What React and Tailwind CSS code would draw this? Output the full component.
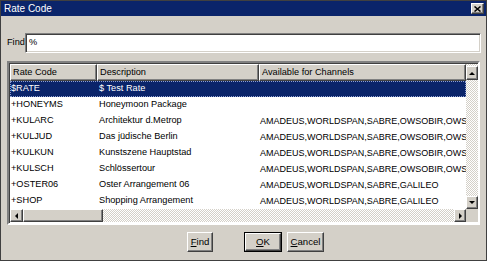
import React from 'react';

const rows = [
  { code: '$RATE', desc: '$ Test Rate', ch: '' },
  { code: '+HONEYMS', desc: 'Honeymoon Package', ch: '' },
  { code: '+KULARC', desc: 'Architektur d.Metrop', ch: 'AMADEUS,WORLDSPAN,SABRE,OWSOBIR,OWSUNI' },
  { code: '+KULJUD', desc: 'Das jüdische Berlin', ch: 'AMADEUS,WORLDSPAN,SABRE,OWSOBIR,OWSUNI' },
  { code: '+KULKUN', desc: 'Kunstszene Hauptstad', ch: 'AMADEUS,WORLDSPAN,SABRE,OWSOBIR,OWSUNI' },
  { code: '+KULSCH', desc: 'Schlössertour', ch: 'AMADEUS,WORLDSPAN,SABRE,OWSOBIR,OWSUNI' },
  { code: '+OSTER06', desc: 'Oster Arrangement 06', ch: 'AMADEUS,WORLDSPAN,SABRE,GALILEO' },
  { code: '+SHOP', desc: 'Shopping Arrangement', ch: 'AMADEUS,WORLDSPAN,SABRE,GALILEO' },
];

const raised = 'bg-[#d4d0c8] border border-t-white border-l-white border-b-[#404040] border-r-[#404040] shadow-[inset_-1px_-1px_#808080]';
const checker = 'bg-[repeating-conic-gradient(#ffffff_0_25%,#d4d0c8_0_50%)] bg-[length:2px_2px]';

const Arrow = ({ dir }) => {
  const pts = {
    up: '1,4 4,1 7,4',
    down: '1,1 4,4 7,1',
    left: '4,1 1,4 4,7',
    right: '1,1 4,4 1,7',
  }[dir];
  const vertical = dir === 'up' || dir === 'down';
  return (
    <svg width={vertical ? 8 : 5} height={vertical ? 5 : 8} viewBox={vertical ? '0 0 8 5' : '0 0 5 8'}>
      <polygon points={pts} fill="#000" />
    </svg>
  );
};

const Btn = ({ children, w, isDefault }) => (
  <div className={`h-[20px] ${w} ${isDefault ? 'border border-black' : ''}`}>
    <div className={`h-full w-full flex items-center justify-center ${raised}`}>{children}</div>
  </div>
);

export default function App() {
  return (
    <div
      className="w-[487px] h-[261px] bg-[#d4d0c8] border border-[#404040] flex flex-col text-black text-[9.2px] leading-none overflow-hidden"
      style={{ fontFamily: '"Liberation Sans", Arial, sans-serif' }}
    >
      {/* title bar */}
      <div className="h-[15px] bg-[#0a246a] flex items-center pl-[3px] pr-[2px] shrink-0">
        <span className="text-white text-[10px] mr-auto">Rate Code</span>
        <div className={`w-[13px] h-[11px] flex items-center justify-center ${raised}`}>
          <svg width="7" height="6" viewBox="0 0 7 6">
            <path d="M0.5 0.5 L6.5 5.5 M6.5 0.5 L0.5 5.5" stroke="#000" strokeWidth="1.5" />
          </svg>
        </div>
      </div>

      {/* find row */}
      <div className="flex items-center mt-[17px] pl-[6px] pr-[5px] h-[20px] shrink-0">
        <span className="w-[18px]">Find</span>
        <div className="flex-1 h-full bg-white border border-t-[#808080] border-l-[#808080] border-b-white border-r-white shadow-[inset_1px_1px_#404040,inset_-1px_-1px_#d4d0c8] flex items-center pl-[3px]">
          %
        </div>
      </div>

      {/* grid */}
      <div className="mt-[8px] mx-[6px] h-[164px] shrink-0 border-2 border-t-[#808080] border-l-[#808080] border-b-white border-r-white shadow-[inset_1px_1px_#404040] bg-white flex p-px pr-0">
        <div className="flex-1 flex flex-col min-w-0">
          <div className="flex h-[17px] shrink-0">
            <div className={`w-[87px] flex items-center pl-[2px] ${raised}`}>Rate Code</div>
            <div className={`w-[162px] flex items-center pl-[2px] ${raised}`}>Description</div>
            <div className={`flex-1 flex items-center pl-[2px] ${raised}`}>Available for Channels</div>
          </div>
          <div className="flex flex-col h-[128px] shrink-0">
            {rows.map((r, i) => (
              <div
                key={r.code}
                className={`flex h-[16px] items-center whitespace-nowrap overflow-hidden ${i === 0 ? 'bg-[#0a246a] text-white outline-1 outline-dotted outline-[#8fa0d0] -outline-offset-1' : ''}`}
              >
                <div className="w-[87px] pl-px">{r.code}</div>
                <div className="w-[162px] pl-[2px]">{r.desc}</div>
                <div className="flex-1 pl-px overflow-hidden text-[9px]">{r.ch}</div>
              </div>
            ))}
          </div>
          <div className="flex-1" />
          <div className={`h-[13px] flex shrink-0 ${checker}`}>
            <div className={`w-[13px] flex items-center justify-center ${raised}`}><Arrow dir="left" /></div>
            <div className={`w-[80px] ${raised}`} />
            <div className="flex-1" />
            <div className={`w-[12px] flex items-center justify-center ${raised}`}><Arrow dir="right" /></div>
          </div>
        </div>
        <div className="w-[12px] flex flex-col">
          <div className={`flex-1 flex flex-col ${checker}`}>
            <div className={`h-[14px] mt-[2px] flex items-center justify-center ${raised}`}><Arrow dir="up" /></div>
            <div className="flex-1" />
            <div className={`h-[13px] flex items-center justify-center ${raised}`}><Arrow dir="down" /></div>
          </div>
          <div className="h-[13px] bg-[#d4d0c8]" />
        </div>
      </div>

      {/* buttons */}
      <div className="flex mt-[7px] pl-[186px] text-[9.6px]">
        <Btn w="w-[26px]"><span><u>F</u>ind</span></Btn>
        <div className="w-[31px]" />
        <Btn w="w-[38px]" isDefault><span><u>O</u>K</span></Btn>
        <div className="w-[5px]" />
        <Btn w="w-[37px]"><span><u>C</u>ancel</span></Btn>
      </div>
    </div>
  );
}
